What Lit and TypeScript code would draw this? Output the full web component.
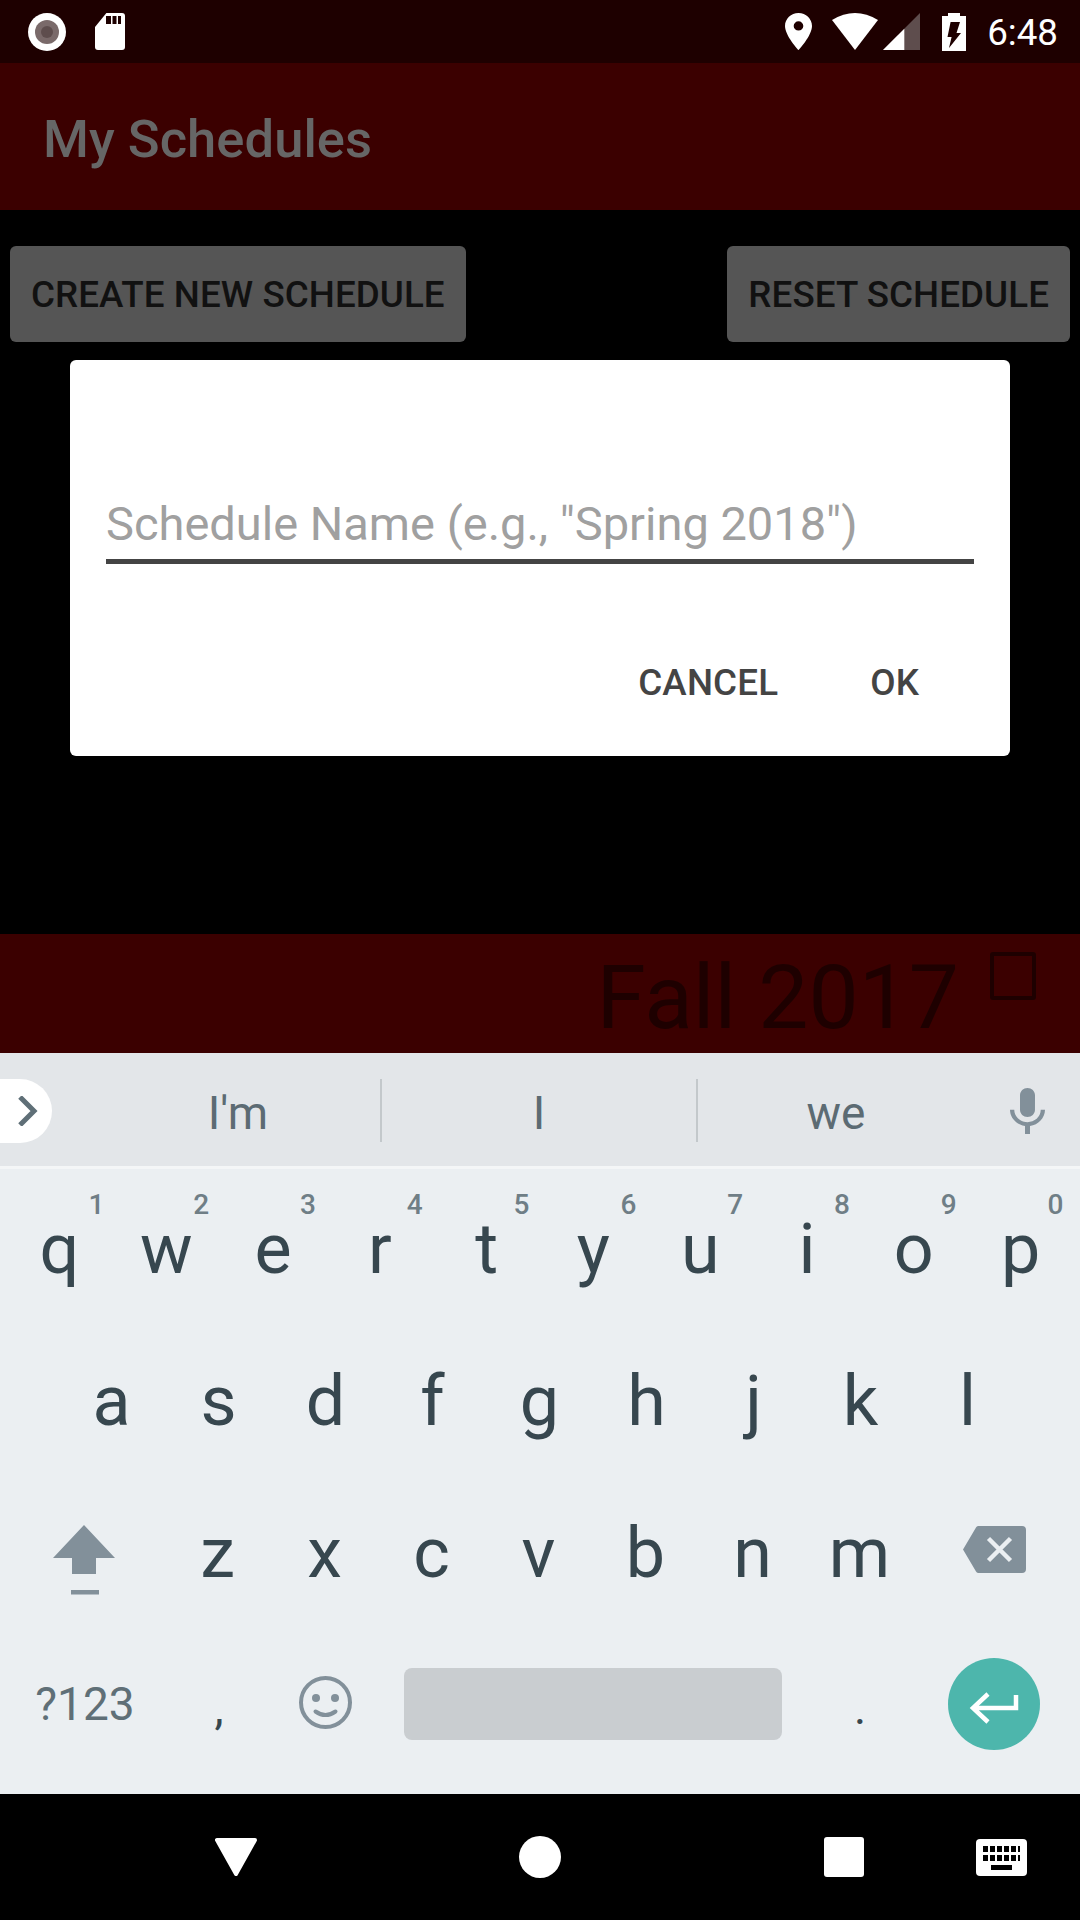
import { html, css, LitElement } from 'lit';
import { customElement } from 'lit/decorators.js';

const ROW1 = [['q', '1'], ['w', '2'], ['e', '3'], ['r', '4'], ['t', '5'], ['y', '6'], ['u', '7'], ['i', '8'], ['o', '9'], ['p', '0']];
const ROW2 = ['a', 's', 'd', 'f', 'g', 'h', 'j', 'k', 'l'];
const ROW3 = ['z', 'x', 'c', 'v', 'b', 'n', 'm'];

@customElement('app-root')
export class AppRoot extends LitElement {
  static styles = css`
    :host {
      display: flex;
      flex-direction: column;
      position: relative;
      width: 1080px;
      height: 1920px;
      background: #000;
      font-family: Roboto, "Noto Sans", sans-serif;
      overflow: hidden;
    }
    svg { display: block; flex: none; }

    .status {
      display: flex;
      align-items: center;
      height: 63px;
      flex: none;
      padding: 0 22px 0 28px;
      box-sizing: border-box;
      background: #1e0000;
    }
    .sd { margin-left: 29px; }
    .pin { margin-left: auto; }
    .wifi { margin-left: 20px; }
    .signal { margin-left: 5px; }
    .battery { margin-left: 22px; }
    .time {
      margin-left: 21px;
      padding-top: 2px;
      font-size: 36.75px;
      line-height: 61px;
      color: #fff;
    }

    .appbar {
      height: 147px;
      flex: none;
      box-sizing: border-box;
      padding: 5px 0 0 43px;
      background: #3b0000;
      color: #666;
      font-size: 52.5px;
      font-weight: 500;
      letter-spacing: 0.05px;
      line-height: 142px;
    }

    .content {
      flex: 1;
      display: flex;
      flex-direction: column;
    }
    .actions {
      display: flex;
      justify-content: space-between;
      padding: 36px 10px 0;
    }
    .btn {
      height: 96px;
      box-sizing: border-box;
      padding: 2px 21px 0;
      border-radius: 6px;
      background: #555;
      color: #111;
      font-size: 36.75px;
      font-weight: 500;
      letter-spacing: 0.07px;
      line-height: 94px;
    }
    .sched {
      display: flex;
      justify-content: flex-end;
      height: 119px;
      margin-top: auto;
      padding-right: 44px;
      background: #3b0000;
      color: #1e0000;
      font-size: 89.25px;
      line-height: 119px;
    }
    .sched-name { padding-top: 4px; }
    .check {
      width: 46px;
      height: 48px;
      box-sizing: border-box;
      margin: 18px 0 0 31px;
      border: 4px solid #1e0000;
      border-radius: 3px;
    }

    .dialog {
      position: absolute;
      left: 70px;
      top: 360px;
      width: 940px;
      height: 396px;
      box-sizing: border-box;
      padding: 132px 36px 0;
      border-radius: 6px;
      background: #fff;
    }
    .field {
      height: 72px;
      box-sizing: border-box;
      border-bottom: 5px solid #444;
      color: #a0a0a0;
      font-size: 47px;
      line-height: 64px;
    }
    .dialog-actions {
      display: flex;
      justify-content: flex-end;
      gap: 92px;
      margin-top: 94px;
      padding-right: 55px;
      color: #444;
      font-size: 36.75px;
      font-weight: 500;
      letter-spacing: 0.15px;
      line-height: 50px;
    }

    .keyboard {
      height: 741px;
      flex: none;
      background: #ebeff2;
    }
    .strip {
      display: grid;
      grid-template-columns: 96px 284px 316px 278px 106px;
      align-items: center;
      height: 113px;
      background: #e3e6e9;
      border-bottom: 3px solid #f4f6f7;
      color: #5c6b73;
      font-size: 46px;
    }
    .pill {
      display: flex;
      align-items: center;
      justify-content: flex-end;
      width: 52px;
      height: 64px;
      box-sizing: border-box;
      margin-top: 2px;
      padding-right: 14px;
      border-radius: 0 32px 32px 0;
      background: #fff;
    }
    .sug {
      height: 63px;
      box-sizing: border-box;
      margin-top: 1px;
      padding-top: 4px;
      line-height: 61px;
      text-align: center;
    }
    .sug.div { border-left: 2px solid #c3c8cb; }
    .mic { justify-self: center; margin-top: 3px; }

    .rows { padding-top: 4px; }
    .row {
      display: flex;
      height: 152px;
      color: #37474f;
      font-size: 70px;
      line-height: 152px;
    }
    .row.top { padding-left: 6px; }
    .row.mid { padding-left: 58px; }
    .key {
      position: relative;
      width: 107px;
      flex: none;
      text-align: center;
    }
    .row.top .key { width: 106.8px; }
    .hint {
      position: absolute;
      top: 18px;
      left: calc(50% + 35px);
      transform: translateX(-50%);
      color: #6f7e86;
      font-size: 28px;
      font-weight: 500;
      line-height: 28px;
    }
    .key:first-child .hint { left: calc(50% + 37px); }
    .shift-key {
      display: flex;
      justify-content: center;
      width: 164px;
      padding: 48px 0 0 4px;
      box-sizing: border-box;
    }
    .back-key {
      display: flex;
      justify-content: flex-end;
      width: 113px;
      padding-top: 49px;
      box-sizing: border-box;
    }
    .row.bottom {
      height: 150px;
      align-items: center;
      font-size: 46px;
      line-height: 150px;
    }
    .sym { width: 170px; flex: none; text-align: center; color: #5f6f77; }
    .comma { width: 98px; flex: none; padding-top: 8px; box-sizing: border-box; text-align: center; }
    .emoji { width: 114px; flex: none; display: flex; justify-content: center; margin-top: -4px; }
    .space {
      width: 378px;
      height: 72px;
      flex: none;
      margin: -1px 0 0 22px;
      border-radius: 8px;
      background: #c9cdd0;
    }
    .period { width: 156px; flex: none; padding-top: 8px; box-sizing: border-box; text-align: center; }
    .enter {
      width: 92px;
      height: 92px;
      flex: none;
      margin-left: 10px;
      border-radius: 50%;
      background: #4db6ac;
    }

    .nav {
      display: flex;
      align-items: center;
      height: 126px;
      flex: none;
      padding-left: 215px;
      box-sizing: border-box;
      background: #000;
    }
    .nav-circle {
      width: 42px;
      height: 42px;
      margin-left: 262px;
      border-radius: 50%;
      background: #fff;
    }
    .nav-square {
      width: 40px;
      height: 40px;
      margin-left: 263px;
      border-radius: 3px;
      background: #fff;
    }
    .nav-kb { margin-left: 112px; }
  `;

  renderStatus() {
    return html`
      <div class="status">
        <svg width="38" height="38" viewBox="0 0 38 38">
          <circle cx="19" cy="19" r="19" fill="#fff"/>
          <circle cx="19" cy="19" r="12" fill="#7a6a6a"/>
          <circle cx="19" cy="19" r="6" fill="#5e4d4d"/>
        </svg>
        <svg class="sd" width="30" height="37" viewBox="0 0 30 37">
          <path fill="#fff" d="M11.400 0H27a3 3 0 0 1 3 3v31a3 3 0 0 1-3 3H3a3 3 0 0 1-3-3V14z"/>
          <path fill="#1e0000" d="M11 3h5v8h-5zM17.500 3h4v8h-4zM23 3h3v8h-3z"/>
        </svg>
        <svg class="pin" width="27" height="37" viewBox="5 2 14 20" preserveAspectRatio="none">
          <path fill="#fff" d="M12 2C8.130 2 5 5.130 5 9c0 5.250 7 13 7 13s7-7.750 7-13c0-3.870-3.130-7-7-7zm0 9.500a2.500 2.500 0 0 1 0-5 2.500 2.500 0 0 1 0 5z"/>
        </svg>
        <svg class="wifi" width="46" height="37" viewBox="0 0 46 37">
          <path fill="#fff" d="M23 37L0 7Q23-7 46 7z"/>
        </svg>
        <svg class="signal" width="37" height="37" viewBox="0 0 37 37">
          <path fill="#5e4d4d" d="M0 37L37 0v37z"/>
          <path fill="#fff" d="M0 37L21.300 15.700V37z"/>
        </svg>
        <svg class="battery" width="24" height="38" viewBox="0 0 24 38">
          <path fill="#fff" d="M6 0h12v3h6v35H0V3h6z"/>
          <path fill="#1e0000" d="M8.600 9H18l-3.500 11H19L7 35l2.600-11H5.500z"/>
        </svg>
        <span class="time">6:48</span>
      </div>
    `;
  }

  renderStrip() {
    return html`
      <div class="strip">
        <div class="pill">
          <svg width="21" height="30" viewBox="0 0 21 30">
            <path fill="none" stroke="#5f6f77" stroke-width="5" d="M3 1l14 14L3 29"/>
          </svg>
        </div>
        <div class="sug">I'm</div>
        <div class="sug div">I</div>
        <div class="sug div">we</div>
        <svg class="mic" width="35" height="46" viewBox="5 2 14 19" preserveAspectRatio="none">
          <path fill="#82909a" d="M12 14c1.660 0 2.990-1.340 2.990-3L15 5c0-1.660-1.340-3-3-3S9 3.340 9 5v6c0 1.660 1.340 3 3 3zm5.300-3c0 3-2.540 5.100-5.300 5.100S6.700 14 6.700 11H5c0 3.410 2.720 6.230 6 6.720V21h2v-3.280c3.280-.48 6-3.300 6-6.720h-1.700z"/>
        </svg>
      </div>
    `;
  }

  renderKeys() {
    return html`
      <div class="rows">
        <div class="row top">
          ${ROW1.map(([k, n]) => html`<div class="key">${k}<span class="hint">${n}</span></div>`)}
        </div>
        <div class="row mid">
          ${ROW2.map((k) => html`<div class="key">${k}</div>`)}
        </div>
        <div class="row">
          <div class="shift-key">
            <svg width="62" height="70" viewBox="0 0 62 70">
              <path fill="#82909a" d="M31 0L62 33H43V49H19V33H0zM18 65h28v4.500H18z"/>
            </svg>
          </div>
          ${ROW3.map((k) => html`<div class="key">${k}</div>`)}
          <div class="back-key">
            <svg width="63" height="47" viewBox="0 0 63 47">
              <path fill="#82909a" d="M16 0h43a4 4 0 0 1 4 4v39a4 4 0 0 1-4 4H16a3 3 0 0 1-3-1.500L0 23.500 13 1.500A3 3 0 0 1 16 0z"/>
              <path fill="none" stroke="#ebeff2" stroke-width="4.500" d="M25.500 12.500l22 22M47.500 12.500l-22 22"/>
            </svg>
          </div>
        </div>
        <div class="row bottom">
          <div class="sym">?123</div>
          <div class="comma">,</div>
          <div class="emoji">
            <svg width="53" height="53" viewBox="0 0 53 53">
              <circle cx="26.500" cy="26.500" r="24.500" fill="none" stroke="#82909a" stroke-width="4"/>
              <circle cx="17" cy="22" r="4" fill="#82909a"/>
              <circle cx="36" cy="22" r="4" fill="#82909a"/>
              <path fill="none" stroke="#82909a" stroke-width="4" stroke-linecap="round" d="M16.500 35.500q10 7 20 0"/>
            </svg>
          </div>
          <div class="space"></div>
          <div class="period">.</div>
          <div class="enter">
            <svg width="92" height="92" viewBox="0 0 92 92">
              <path fill="none" stroke="#fff" stroke-width="4.500" d="M68 37v13H25M40 36L25 50l15 14"/>
            </svg>
          </div>
        </div>
      </div>
    `;
  }

  render() {
    return html`
      ${this.renderStatus()}
      <div class="appbar">My Schedules</div>
      <div class="content">
        <div class="actions">
          <div class="btn">CREATE NEW SCHEDULE</div>
          <div class="btn">RESET SCHEDULE</div>
        </div>
        <div class="sched">
          <div class="sched-name">Fall 2017</div>
          <div class="check"></div>
        </div>
      </div>
      <div class="dialog">
        <div class="field">Schedule Name (e.g., "Spring 2018")</div>
        <div class="dialog-actions"><span>CANCEL</span><span>OK</span></div>
      </div>
      <div class="keyboard">
        ${this.renderStrip()}
        ${this.renderKeys()}
      </div>
      <div class="nav">
        <svg width="42" height="38" viewBox="0 0 42 38">
          <path fill="#fff" stroke="#fff" stroke-width="4" stroke-linejoin="round" d="M2 2h38L21 36z"/>
        </svg>
        <div class="nav-circle"></div>
        <div class="nav-square"></div>
        <svg class="nav-kb" width="51" height="37" viewBox="0 0 51 37">
          <rect width="51" height="37" rx="4" fill="#fff"/>
          <path fill="#000" d="M7 7h5v6H7zM14 7h5v6h-5zM21 7h5v6h-5zM28 7h5v6h-5zM35 7h5v6h-5zM42 7h2v6h-2zM7 16h5v6H7zM14 16h5v6h-5zM21 16h5v6h-5zM28 16h5v6h-5zM35 16h5v6h-5zM42 16h2v6h-2zM15 26h21v5H15z"/>
        </svg>
      </div>
    `;
  }
}
